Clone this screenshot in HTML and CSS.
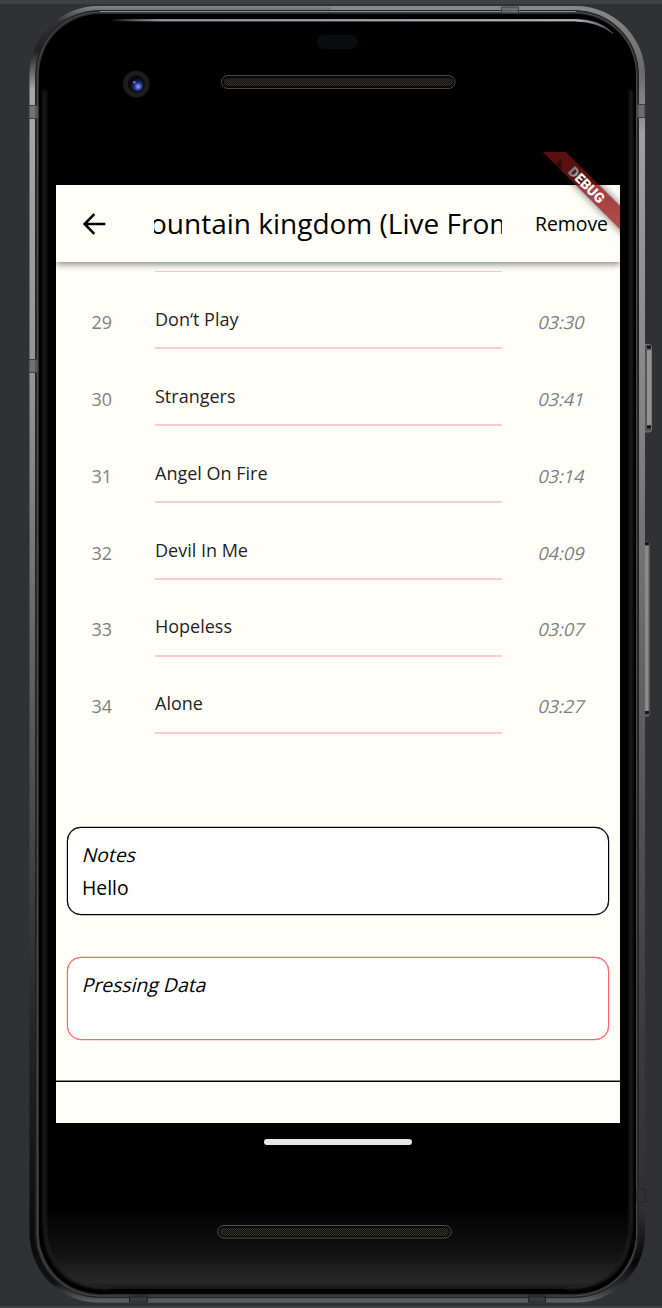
FILE: index.html
```html
<!DOCTYPE html>
<html lang="en">
<head>
<meta charset="utf-8">
<title>Album</title>
<link rel="stylesheet" href="styles.css">
</head>
<body>
<div class="stage">
  <svg class="device" width="662" height="1308" viewBox="0 0 662 1308" aria-hidden="true">
    <defs>
      <linearGradient id="rimL" x1="0" y1="6" x2="0" y2="1302" gradientUnits="userSpaceOnUse">
        <stop offset="0" stop-color="#858585"/><stop offset=".012" stop-color="#303030"/><stop offset=".035" stop-color="#222"/><stop offset=".065" stop-color="#a8a8a8"/>
        <stop offset=".3" stop-color="#929292"/><stop offset=".48" stop-color="#686868"/><stop offset=".65" stop-color="#444"/><stop offset=".8" stop-color="#242424"/>
        <stop offset=".95" stop-color="#0b0b0b"/><stop offset=".985" stop-color="#111"/><stop offset="1" stop-color="#626262"/>
      </linearGradient>
      <linearGradient id="rimR" x1="0" y1="6" x2="0" y2="1302" gradientUnits="userSpaceOnUse">
        <stop offset="0" stop-color="#888"/><stop offset=".05" stop-color="#6a6a6a"/><stop offset=".1" stop-color="#a0a0a0"/>
        <stop offset=".3" stop-color="#858585"/><stop offset=".55" stop-color="#5e5e5e"/><stop offset=".8" stop-color="#3a3a3a"/>
        <stop offset=".93" stop-color="#303030"/><stop offset=".97" stop-color="#050505"/><stop offset=".99" stop-color="#333"/><stop offset="1" stop-color="#626262"/>
      </linearGradient>
      <linearGradient id="chin" x1="0" y1="1205" x2="0" y2="1293" gradientUnits="userSpaceOnUse">
        <stop offset="0" stop-color="#000"/><stop offset=".5" stop-color="#101010"/><stop offset=".88" stop-color="#282828"/><stop offset="1" stop-color="#0a0a0a"/>
      </linearGradient>
      <linearGradient id="shine" x1="110" y1="0" x2="614" y2="0" gradientUnits="userSpaceOnUse">
        <stop offset="0" stop-color="#8e989d" stop-opacity="0"/><stop offset=".1" stop-color="#8e989d"/><stop offset=".93" stop-color="#aeb7ba"/><stop offset="1" stop-color="#667" stop-opacity=".6"/>
      </linearGradient>
      <pattern id="mesh" width="2" height="2" patternUnits="userSpaceOnUse">
        <rect width="2" height="2" fill="#12110e"/><path d="M0 0h1v1H0zM1 1h1v1H1z" fill="#35322b"/>
      </pattern>
      <radialGradient id="lens" cx=".6" cy=".65" r=".6">
        <stop offset="0" stop-color="#a4b4ff"/><stop offset=".25" stop-color="#5268d0"/><stop offset=".55" stop-color="#1c2868"/><stop offset="1" stop-color="#07080f"/>
      </radialGradient>
      <filter id="soft" x="-10%" y="-10%" width="120%" height="120%"><feGaussianBlur stdDeviation="1.6"/></filter>
      <clipPath id="leftHalf"><rect width="331" height="1308"/></clipPath>
      <clipPath id="rightHalf"><rect x="331" width="331" height="1308"/></clipPath>
    </defs>
    <rect width="662" height="1308" fill="#303134"/>
    <rect width="662" height="4" fill="#3d4144"/>
    <rect y="1306" width="662" height="2" fill="#3d4144"/>

    <!-- side buttons -->
    <rect x="643.5" y="344.500" width="8" height="87.500" rx="2.500" fill="#555" stroke="#777"/>
    <rect x="647" y="350" width="4" height="75" fill="#929292"/>
    <path d="M647 347h4M647 427h4" stroke="#151515" stroke-width="3"/>
    <rect x="642.500" y="541.500" width="7" height="175" rx="2.500" fill="#5c5c5c" stroke="#555"/>
    <rect x="645" y="546" width="3.500" height="165" fill="#8b8b8b"/>
    <path d="M645 543.500h4M645 712.500h4" stroke="#151515" stroke-width="3"/>

    <!-- metal rim -->
    <rect x="29.500" y="6" width="615.500" height="1296.500" rx="69" fill="url(#rimL)" clip-path="url(#leftHalf)"/>
    <rect x="29.500" y="6" width="615.500" height="1296.500" rx="69" fill="url(#rimR)" clip-path="url(#rightHalf)"/>
    <rect x="35.500" y="10.500" width="603" height="1287" rx="64" fill="#2b2b2b" stroke="#222"/>
    <rect x="37.500" y="12" width="599" height="1284" rx="62" fill="none" stroke="#4a4a4a" stroke-width="1"/>
    <path d="M100 11.500H576" stroke="#8d8d8d"/>
    <g fill="#666" stroke="#404040" fill-opacity=".8">
      <path d="M29 105.500h9v13h-9zM29 359.500h9v13h-9zM637 104.500h8v13h-8z"/>
      <path d="M501.500 7h17v6h-17z"/>
      <path d="M129.500 1296h18v6h-18zM528.500 1296h17v6h-17zM637 1189h8v13h-8z" fill="#333" stroke="#222"/>
    </g>
    <rect x="39" y="14" width="597" height="1280" rx="61" fill="#000"/>
    <rect x="45" y="1205" width="585" height="84" fill="url(#chin)" clip-path="inset(0 round 0 0 60px 60px)"/>
    <path d="M44.500 90V1222Q45 1288 110 1288M631 90V1222Q630 1288 566 1288" fill="none" stroke="#202020" stroke-width="3" filter="url(#soft)"/>
    <path d="M110 19.500H575Q600 19.500 613 33.500Q598 21.500 575 21H110z" fill="url(#shine)" stroke="url(#shine)" stroke-width=".8"/>

    <!-- camera, sensor, speakers -->
    <circle cx="136.300" cy="84" r="13.300" fill="#1d1d1f"/>
    <circle cx="136.300" cy="84" r="8.500" fill="#08080c"/>
    <circle cx="136.800" cy="84.500" r="6.800" fill="url(#lens)"/>
    <circle cx="134.300" cy="82.300" r="1.300" fill="#6079e8"/>
    <rect x="317" y="35" width="41" height="14" rx="7" fill="#0a0b0f"/>
    <rect x="221.500" y="75.500" width="233.500" height="13" rx="6.500" fill="#080808" stroke="#484848"/>
    <rect x="224" y="78" width="229" height="8" rx="4" fill="url(#mesh)"/>
    <rect x="217.700" y="1225.500" width="233.500" height="12.500" rx="6.300" fill="#080808" stroke="#535353"/>
    <rect x="220" y="1228" width="229" height="8" rx="4" fill="url(#mesh)"/>
    <rect x="264" y="1139" width="148" height="6" rx="3" fill="#e8e8e8"/>
  </svg>

  <main class="screen">
    <header class="appbar">
      <svg class="back" width="24" height="24" viewBox="0 0 24 24"><path d="M12.300 2.200 2.600 12l9.700 9.800M3 12h20.300" fill="none" stroke="#000" stroke-width="2.500"/></svg>
      <div class="marquee"><span class="marquee-text">ountain kingdom (Live From</span></div>
      <span class="remove">Remove</span>
    </header>

    <section class="tracks">
      <div class="divider"></div>
      <div class="track"><span class="num">29</span><span class="name">Don‘t Play</span><span class="time"><span class="oblique">03:30</span></span></div>
      <div class="track"><span class="num">30</span><span class="name">Strangers</span><span class="time"><span class="oblique">03:41</span></span></div>
      <div class="track"><span class="num">31</span><span class="name">Angel On Fire</span><span class="time"><span class="oblique">03:14</span></span></div>
      <div class="track"><span class="num">32</span><span class="name">Devil In Me</span><span class="time"><span class="oblique">04:09</span></span></div>
      <div class="track"><span class="num">33</span><span class="name">Hopeless</span><span class="time"><span class="oblique">03:07</span></span></div>
      <div class="track"><span class="num">34</span><span class="name">Alone</span><span class="time"><span class="oblique">03:27</span></span></div>
    </section>

    <section class="card notes"><span class="oblique">Notes</span><span class="value">Hello</span></section>
    <section class="card pressing"><span class="oblique">Pressing Data</span></section>
    <div class="rule"></div>
  </main>

  <svg class="banner" width="78" height="100" viewBox="542 152 78 100">
    <defs>
      <linearGradient id="tag" x1="0" y1="152" x2="0" y2="229" gradientUnits="userSpaceOnUse">
        <stop offset="0" stop-color="#5a0f11"/><stop offset=".425" stop-color="#5a0f11"/><stop offset=".43" stop-color="#a23c3d"/><stop offset="1" stop-color="#b24d4c"/>
      </linearGradient>
      <linearGradient id="ink" x1="0" y1="0" x2="1" y2="0">
        <stop offset="0" stop-color="#777"/><stop offset=".17" stop-color="#999"/><stop offset=".28" stop-color="#fff"/>
      </linearGradient>
      <filter id="drop" x="-20%" y="-20%" width="140%" height="140%"><feGaussianBlur stdDeviation="4.500"/></filter>
      <clipPath id="lit"><rect x="542" y="185" width="78" height="78"/></clipPath>
    </defs>
    <g clip-path="url(#lit)"><path d="M543 152h23l80 80v23z" fill="#000" opacity=".6" filter="url(#drop)"/></g>
    <path d="M542.700 152H566L620 206V229.300z" fill="url(#tag)"/>
    <path d="M555 164.500l6.500-6v12z" fill="#34090b"/>
    <text class="banner-text" transform="translate(586.600 184.800) rotate(45)" x="0" y="5" text-anchor="middle" fill="url(#ink)">DEBUG</text>
  </svg>
</div>
</body>
</html>
```
FILE: styles.css
```css
* { box-sizing: border-box; }

body {
  margin: 0;
  background: #303134;
  font-family: "Open Sans", "Noto Sans", sans-serif;
  color: #000;
}

.stage {
  position: relative;
  width: 662px;
  height: 1308px;
  padding: 185px 42px 0 56px;
  overflow: hidden;
}

.device { position: absolute; left: 0; top: 0; }

.screen {
  position: relative;
  z-index: 0;
  width: 564px;
  height: 938px;
  background: #fffef9;
  overflow: hidden;
}

.appbar {
  position: relative;
  z-index: 1;
  display: grid;
  grid-template-columns: 98px 348px 1fr;
  align-items: center;
  height: 77px;
  background: #fffef9;
  box-shadow: 0 2px 7px rgba(0, 0, 0, .5);
}

.back { display: block; margin-left: 26px; }

.marquee { overflow: hidden; white-space: nowrap; padding-bottom: 2px; }
.marquee-text { display: inline-block; margin-left: -4px; font-size: 28px; line-height: 40px; }

.remove { justify-self: end; padding-right: 12px; font-size: 19.400px; line-height: 28px; }

.oblique {
  display: inline-block;
  align-self: flex-start;
  transform: skewX(-14deg);
  transform-origin: 0 68%;
}

.tracks { font-size: 18px; line-height: 24px; }

.divider {
  width: 347px;
  height: 1px;
  margin: 9px 0 0 99px;
  background: #ffc3c3;
}

.track {
  display: grid;
  grid-template-columns: 99px 347px 1fr;
  height: 76.850px;
}

.track .num, .track .time { color: #7f7f7d; padding-top: 38px; }
.track .num { padding-left: 35.500px; }
.track .time { padding-left: 36px; }
.track .name {
  margin-bottom: -.5px;
  padding-top: 35px;
  color: #1f1f1f;
  background: linear-gradient(#ffcccb, #ffcccb) bottom / 100% 2px no-repeat;
}

.card {
  display: flex;
  flex-direction: column;
  width: 542px;
  margin-left: 11px;
  padding: 13px 14px;
  border: 1px solid #000;
  border-radius: 14px;
  box-shadow: 0 0 0 .2px #000;
  background: #fff;
  font-size: 19.400px;
  line-height: 28px;
}

.value { padding-top: 5px; }
.notes { height: 88px; margin-top: 93.900px; }
.pressing { height: 83px; margin-top: 42px; border-color: #ff6464; box-shadow: 0 0 0 .2px #ff6464; }

.rule { height: 2px; margin-top: 40px; background: linear-gradient(#888 50%, #000 50%); }

.banner { position: absolute; z-index: 2; left: 542px; top: 152px; }
.banner-text { font: 900 14px Roboto, sans-serif; }
```
